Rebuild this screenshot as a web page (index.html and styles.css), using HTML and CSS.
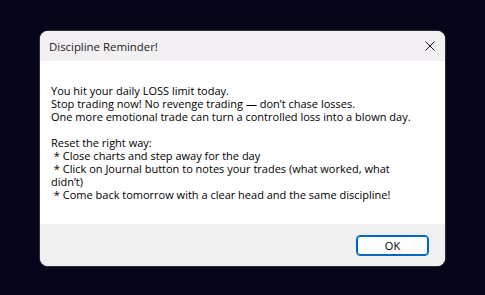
FILE: index.html
```html
<!DOCTYPE html>
<html>
<head>
<meta charset="utf-8">
<link rel="stylesheet" href="styles.css">
</head>
<body>
<div class="dialog">
  <div class="titlebar">
    <span class="title">Discipline Reminder!</span>
    <svg class="close" width="10" height="10" viewBox="0 0 10 10"><path d="M0.5 0.5 L9.5 9.5 M9.5 0.5 L0.5 9.5" stroke="#1a1a1a" stroke-width="1" fill="none"/></svg>
  </div>
  <div class="content">
    <p>You hit your daily LOSS limit today.<br>Stop trading now! No revenge trading — don’t chase losses.<br>One more emotional trade can turn a controlled loss into a blown day.</p>
    <p>Reset the right way:<br>&nbsp;* Close charts and step away for the day<br>&nbsp;* Click on Journal button to notes your trades (what worked, what didn’t)<br>&nbsp;* Come back tomorrow with a clear head and the same discipline!</p>
  </div>
  <div class="footer">
    <button class="ok">OK</button>
  </div>
</div>
</body>
</html>
```
FILE: styles.css
```css
html, body {
  margin: 0;
  padding: 0;
  background: #06061a;
  width: 485px;
  height: 295px;
  overflow: hidden;
}
body {
  padding: 31px 0 0 40px;
  box-sizing: border-box;
  font-family: "Open Sans", "Noto Sans", sans-serif;
  color: #000;
}
.dialog {
  width: 405px;
  height: 235px;
  border-radius: 8px;
  overflow: hidden;
  display: flex;
  flex-direction: column;
  background: #fff;
  box-shadow: 0 0 0 1px #2c2c3a;
}
.titlebar {
  height: 30px;
  flex: none;
  background: #f3f0f4;
  display: flex;
  align-items: center;
  justify-content: space-between;
  padding: 0 10px 0 9px;
}
.title {
  font-size: 11.4px;
  color: #1a1a1a;
}
.close {
  display: block;
}
.content {
  flex: 1;
  padding: 23px 30px 0 11px;
  font-size: 11px;
  line-height: 13px;
}
.content p {
  margin: 0 0 13px 0;
}
.footer {
  height: 42px;
  flex: none;
  background: #f0f0f0;
  display: flex;
  align-items: center;
  justify-content: flex-end;
  padding: 0 16px 0 0;
}
.ok {
  width: 73px;
  height: 21px;
  margin-top: 1px;
  border: 1px solid #0067c0;
  box-shadow: inset 0 0 0 1px #0067c0;
  border-radius: 4px;
  background: #fdfdfd;
  font-family: "Open Sans", "Noto Sans", sans-serif;
  font-size: 11px;
  color: #000;
  padding: 0;
}
```
